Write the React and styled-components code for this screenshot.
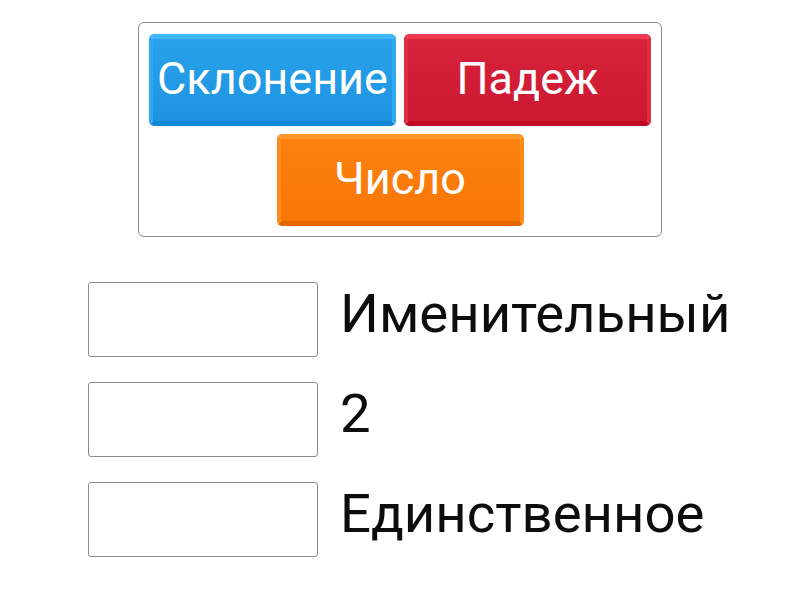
import React from "react";
import styled, { createGlobalStyle } from "styled-components";

const Global = createGlobalStyle`
  html, body { margin: 0; padding: 0; background: #fff; }
  body { font-family: Roboto, "Noto Sans", sans-serif; }
`;

const Page = styled.div`
  width: 800px;
  height: 600px;
  display: flex;
  flex-direction: column;
  align-items: center;
  padding-top: 22px;
  box-sizing: border-box;
`;

const Bank = styled.div`
  width: 524px;
  box-sizing: border-box;
  border: 1px solid #8f8f8f;
  border-radius: 6px;
  padding: 11px 10px 10px;
  display: flex;
  flex-wrap: wrap;
  justify-content: center;
  gap: 8px;
`;

const palette = {
  blue: { face: "#29a1ea", faceEnd: "#1e94e1", top: "#40b7fa", side: "#31a9f2", bottom: "#1587d7" },
  red: { face: "#d6233b", faceEnd: "#cc1731", top: "#ee3a50", side: "#df2c43", bottom: "#c20c24" },
  orange: { face: "#fd810f", faceEnd: "#f77706", top: "#ff962a", side: "#ff8b1c", bottom: "#e86600" },
};

const Tile = styled.div`
  width: 247px;
  height: 92px;
  box-sizing: border-box;
  border-radius: 5px;
  border-style: solid;
  border-width: 5px 4px 5px;
  border-color: ${(p) => palette[p.$c].top} ${(p) => palette[p.$c].side}
    ${(p) => palette[p.$c].bottom} ${(p) => palette[p.$c].side};
  background: linear-gradient(${(p) => palette[p.$c].face}, ${(p) => palette[p.$c].faceEnd});
  color: #fff;
  font-size: 45px;
  display: flex;
  align-items: center;
  justify-content: center;
  white-space: nowrap;
  padding-bottom: 4px;
`;

const Rows = styled.div`
  margin-top: 45px;
  width: 800px;
  display: flex;
  flex-direction: column;
  gap: 25px;
  padding-left: 88px;
  box-sizing: border-box;
`;

const Row = styled.div`
  display: flex;
  align-items: center;
  gap: 22px;
`;

const Slot = styled.div`
  width: 230px;
  height: 75px;
  box-sizing: border-box;
  border: 1px solid #8a8a8a;
  border-radius: 3px;
  flex-shrink: 0;
`;

const Label = styled.div`
  font-size: 54.5px;
  color: #0d0d0d;
  line-height: 1;
  padding-bottom: 12px;
  white-space: nowrap;
`;

export default function App() {
  return (
    <>
      <Global />
      <Page>
        <Bank>
          <Tile $c="blue">Склонение</Tile>
          <Tile $c="red">Падеж</Tile>
          <Tile $c="orange">Число</Tile>
        </Bank>
        <Rows>
          <Row>
            <Slot />
            <Label>Именительный</Label>
          </Row>
          <Row>
            <Slot />
            <Label>2</Label>
          </Row>
          <Row>
            <Slot />
            <Label>Единственное</Label>
          </Row>
        </Rows>
      </Page>
    </>
  );
}
